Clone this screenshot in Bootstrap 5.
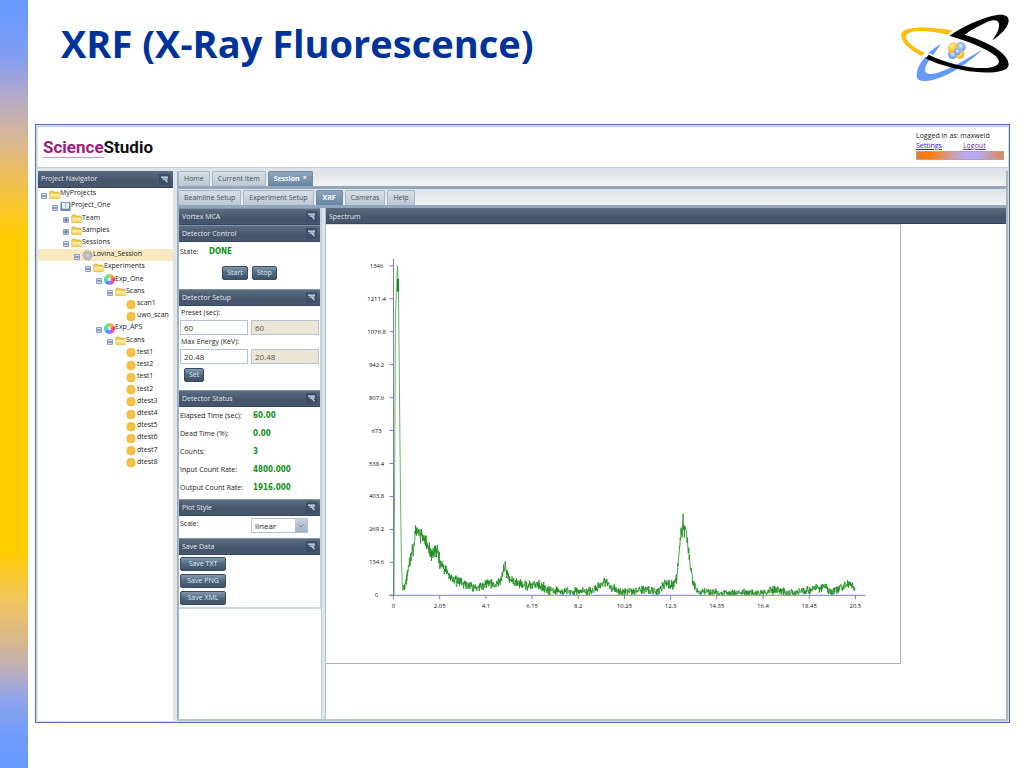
<!DOCTYPE html>
<html lang="en">
<head>
<meta charset="utf-8">
<meta name="viewport" content="width=device-width, initial-scale=1">
<title>XRF (X-Ray Fluorescence)</title>
<link href="https://cdn.jsdelivr.net/npm/bootstrap@5.3.0/dist/css/bootstrap.min.css" rel="stylesheet">
<style>
  body { font-family: "Open Sans", "Noto Sans", sans-serif; font-size: 7px; line-height: 12px; color: #222; background: #fff; }
  button, input, select { font-family: inherit; }
  .stripe { width: 28px; background: linear-gradient(#6699ff 0, #7f9df4 7%, #b0a9ce 12%, #d2b59e 17%, #eebe5a 23%, #fcc822 28%, #ffcc00 31%, #ffcc00 72%, #fcc824 74%, #f2c55c 78%, #dab888 83%, #c0b0b8 87%, #8fa3ea 91%, #6f9cfb 96%, #6699ff 100%); }
  .page-main { min-width: 0; }
  .slide-title { font-size: 38px; line-height: 48px; font-weight: 700; color: #003399; padding-left: 26px; padding-top: 19px; }
  .slide-head { height: 124px; padding-right: 14px; padding-left: 7px; }
  .orbit { width: 110px; height: 70px; margin-top: 13px; }
  .app { border: 1px solid #5867b8; margin: 0 14px 45px 7px; padding: 1px 1px 1px 2px; background: #d5dff0; min-width: 0; }
  .app-head { background: #fff; height: 41px; padding: 4px 4px 0 5px; border-top: 1px solid #b9c6de; }
  .brand { font-family: Roboto, sans-serif; font-size: 17px; line-height: 20px; font-weight: 700; color: #111; margin-top: 6px; }
  .brand span { color: #9c1b7c; border-bottom: 1px solid #d58bc4; }
  .user { width: 88px; line-height: 10px; }
  .user a { color: #2222dd; }
  .user a + a { color: #6a2a96; margin-left: 21px; }
  .user-bar { height: 9px; border: 1px solid #a9a4b4; background: linear-gradient(90deg, #f07818, #ff7d08 15%, #c8a0b0 42%, #b8a8f8 60%, #b8a8ec 72%, #e08850 100%); }
  .work { background: #dde4ec; border-top: 1px solid #c6ccd4; padding-top: 3px; }
  .navigator { width: 135px; background: #fff; }
  .bar { height: 17px; padding: 0 3px; color: #e4ebf2; background: linear-gradient(#5d6d80, #44546a 60%, #46576e); border-bottom: 1px solid #35455a; font-size: 7px; font-weight: 400; line-height: 12px; }
  .tool { width: 11px; height: 11px; padding: 0; border: 0; background: none; display: block; line-height: 0; }
  .tool svg { width: 11px; height: 11px; }
  .tree { height: 281px; display: grid; grid-auto-rows: minmax(0, 1fr); list-style: none; margin: 0; padding: 0; }
  .tree li { display: flex; align-items: center; line-height: 12px; white-space: nowrap; min-height: 0; }
  .tree .active { background: #f8e9c2; }
  .tree svg { flex: none; }
  .tree .toggle { width: 6px; height: 6px; margin: 3px 2px 0 3px; }
  .tree .leaf { margin-left: 11px; }
  .tree .glyph { width: 11px; height: 11px; }
  .tree span { padding-bottom: 2px; line-height: 10px; }
  .l1 { padding-left: 11px } .l2 { padding-left: 22px } .l3 { padding-left: 33px } .l4 { padding-left: 44px }
  .l5 { padding-left: 55px } .l6 { padding-left: 66px } .l7 { padding-left: 77px }
  .content-col { margin-left: 4px; border-left: 1px solid #9fb0c2; border-right: 2px solid #a9b7c8; border-bottom: 2px solid #b8c4d0; min-width: 0; background: #dde4ec; }
  .nav-tabs.strip { height: 18px; border-bottom: 3px solid #8fa6bb; padding-left: 0; gap: 2px; background: linear-gradient(#dfe2e6, #f3f3f3); flex-wrap: nowrap; }
  .nav-tabs.strip .nav-link { height: 15px; padding: 0 5px; line-height: 14px; border: 1px solid #a4b4c4; border-bottom: 0; border-radius: 2px 2px 0 0; color: #4a4f56; background: linear-gradient(#d9dfe5, #bcc8d4); margin: 0; white-space: nowrap; }
  .nav-tabs.strip .nav-link.active { color: #fff; font-weight: 700; background: linear-gradient(#8fa6bc, #6685a3); border-color: #6c88a4; }
  .nav-tabs.strip.second { margin-top: 1px; }
  .strip.second .nav-link.active { padding: 0 6px; }
  .close-x { line-height: 6px; margin-left: 3px; margin-top: -3px; }
  .controls { width: 144px; border-left: 1px solid #a8b4c2; border-right: 1px solid #c2ccd8; background: #fff; }
  .controls .bar { margin-bottom: 0; border-top: 1px solid #8094a8; }
  .controls .inner { border-bottom: 2px solid #ccd6e0; border-right: 1px solid #ccd6e0; }
  .panel-body { padding: 0 1px; }
  .control-body { height: 47px; }
  .control-body .state { width: 29px; }
  .setup-body { height: 84px; }
  .status-body { height: 92px; }
  .scale-body { height: 22px; padding-top: 2px; }
  .scale-body label { width: 71px; }
  .ok { color: #109018; font-family: "DejaVu Sans Condensed", "DejaVu Sans", sans-serif; font-weight: 700; font-size: 8px; }
  .btn.act { font-size: 7px; line-height: 12px; height: 14px; padding: 0 4px; color: #dfe8f0; border: 1px solid #3a4c60; border-radius: 2px; background: linear-gradient(#8298ae, #506880 50%, #3e5268); display: block; }
  .save { gap: 3px; padding: 2px 1px; }
  .save .btn.act { padding: 0 6px; min-width: 46px; }
  .pair { gap: 3px; }
  .form-control.cell { width: 68px; height: 15px; min-height: 0; font-size: 8px; line-height: 12px; padding: 0 3px; border: 1px solid #b4c3d2; border-radius: 0; color: #333; background: #fff; }
  .form-control.cell:disabled { background: #ece6d6; color: #555; }
  .form-label { margin: 0; display: block; line-height: 14px; height: 14px; padding-left: 1px; }
  .stats { display: grid; grid-template-columns: 73px 1fr; grid-auto-rows: 1fr; height: 90px; align-items: center; margin: 0; }
  .stats dt, .stats dd { font-weight: 400; margin: 0; white-space: nowrap; }
  .stats dd { font-weight: 700; }
  .scale { width: 57px; height: 15px; }
  .scale .form-select { appearance: none; font-size: 8px; line-height: 12px; padding: 0 3px; height: 15px; border: 1px solid #b4c3d2; border-radius: 0; background: #fff; color: #222; }
  .scale .arrow { position: absolute; right: 1px; top: 1px; bottom: 1px; width: 12px; background: linear-gradient(#c6d2de, #9fb2c6); pointer-events: none; }
  .plot-col { margin-left: 3px; background: #fff; border-left: 1px solid #b4c0cc; min-width: 0; }
  .plot-col .bar { height: 16px; line-height: 17px; }
  .plot { display: block; width: 575px; height: 440px; max-width: 100%; border: 1px solid #b2b2b2; border-top-color: #ddd; border-left: 0; }
  .plot text { font-size: 6px; fill: #111; text-anchor: middle; }
</style>
</head>
<body>
<svg width="0" height="0" class="position-absolute" aria-hidden="true">
  <defs>
    <linearGradient id="gold" x1="0" y1="0" x2="0" y2="1"><stop offset="0" stop-color="#fdf4b4"/><stop offset="1" stop-color="#f6d050"/></linearGradient>
    <radialGradient id="ballY" cx=".4" cy=".35"><stop offset="0" stop-color="#fff0b0"/><stop offset="1" stop-color="#f8b820"/></radialGradient>
    <radialGradient id="ballB" cx=".5" cy=".4"><stop offset="0" stop-color="#e4ecff"/><stop offset="1" stop-color="#6d98f0"/></radialGradient>
    <symbol id="minus" viewBox="0 0 6 6"><rect width="6" height="6" rx="1" fill="#8fa0c0"/><rect x="1" y="1" width="4" height="4" fill="#d4dcec"/><path d="M1 3h4" stroke="#4a5c88"/></symbol>
    <symbol id="plus" viewBox="0 0 6 6"><rect width="6" height="6" rx="1" fill="#8fa0c0"/><rect x="1" y="1" width="4" height="4" fill="#d4dcec"/><path d="M1 3h4M3 1v4" stroke="#4a5c88"/></symbol>
    <symbol id="folder" viewBox="0 0 11 11"><path d="M.8 9.500V3q0-1 1-1h2.400l1 1h4q1 0 1 1v5.500z" fill="#f0cc54" stroke="#cfa032" stroke-width=".6"/><path d="M1.300 9.600V5h9v4.600z" fill="url(#gold)"/></symbol>
    <symbol id="book" viewBox="0 0 11 11"><path d="M.5 1.800h10v8H.5z" fill="#5b82ae"/><path d="M1.500 1.300q3-.5 4 .8 1-1.300 4-.8v6.800q-3-.4-4 .8-1-1.200-4-.8z" fill="#eaf2fa" stroke="#46699a" stroke-width=".7"/><path d="M5.500 2.300v6.500" stroke="#7a98bc" stroke-width=".7"/></symbol>
    <symbol id="gear" viewBox="0 0 11 11"><circle cx="5.500" cy="5.500" r="4" fill="#bcbcbc"/><circle cx="5.500" cy="5.500" r="4.400" fill="none" stroke="#a2a2a2" stroke-width="1.400" stroke-dasharray="1.600 .9"/><circle cx="5.500" cy="5.500" r="1.200" fill="#dcd8cc"/></symbol>
    <symbol id="wheel" viewBox="0 0 11 11"><path d="M5.500 5.500V0a5.500 5.500 0 0 1 4.800 2.800z" fill="#ffa040"/><path d="M5.500 5.500 10.300 2.800a5.500 5.500 0 0 1 0 5.400z" fill="#f04868"/><path d="M5.500 5.500 10.300 8.200A5.500 5.500 0 0 1 5.500 11z" fill="#c050f0"/><path d="M5.500 5.500V11A5.500 5.500 0 0 1 .7 8.200z" fill="#5a80ff"/><path d="M5.500 5.500.7 8.200a5.500 5.500 0 0 1 0-5.400z" fill="#40d8e0"/><path d="M5.500 5.500.7 2.800A5.500 5.500 0 0 1 5.500 0z" fill="#70e060"/><circle cx="5.500" cy="5.500" r="1.700" fill="#fff" opacity=".7"/></symbol>
    <symbol id="dot" viewBox="0 0 11 11"><rect x=".8" y="1.200" width="8.400" height="8.800" rx="4" fill="#f6c040" stroke="#e6ae34" stroke-width=".5"/></symbol>
    <symbol id="pin" viewBox="0 0 11 11"><rect width="11" height="11" rx="1" fill="#3c4e66"/><path d="M2 2.500h7v1.300H2z" fill="#dbe5f0"/><path d="M3.500 4.300h5.200v1.500H7.400L9 7.800l-.9.900-3-2.900H3.500z" fill="#b4c6da"/></symbol>
  </defs>
</svg>

<div class="d-flex min-vh-100">
  <div class="stripe flex-shrink-0"></div>
  <div class="page-main d-flex flex-column flex-grow-1">
    <header class="slide-head d-flex justify-content-between">
      <h1 class="slide-title m-0">XRF (X-Ray Fluorescence)</h1>
      <svg class="orbit flex-shrink-0" viewBox="60 39 330 210" role="img" aria-label="Orbit logo">
        <path fill="#6699f8" d="M183 132C152 147 118 185 111 215C106 237 118 244 137 243C190 240 262 192 306 149C258 178 190 220 152 222C126 222 134 200 150 178Z"/>
        <path fill="#fdbd10" d="M218 92C160 80 62 75 63 106C65 130 95 155 125 168L134 159C100 141 78 125 78 110C80 88 140 88 203 104Z"/>
        <path fill="#fff" d="M132 167L150 160L178 178L168 192Z"/>
        <path fill="#050505" d="M208 107C250 80 310 50 352 45C374 42 387 48 386 64C384 84 358 108 337 121C349 102 358 90 357 73C356 60 342 57 320 67C298 77 272 90 254 104C330 128 386 160 386 194C385 222 305 221 250 211C205 202 160 188 137 175L146 164C200 190 270 207 320 204C363 201 366 182 340 163C308 140 258 122 208 107Z"/>
        <circle cx="242" cy="141" r="15" fill="url(#ballB)"/><circle cx="218" cy="163" r="14" fill="url(#ballB)"/>
        <circle cx="240" cy="163" r="13" fill="url(#ballY)"/><circle cx="219" cy="143" r="16" fill="url(#ballY)"/>
        <circle cx="232" cy="155" r="10" fill="url(#ballB)"/>
      </svg>
    </header>

    <main class="app flex-grow-1 d-flex flex-column">
      <div class="app-head d-flex justify-content-between">
        <div class="brand"><span>Science</span>Studio</div>
        <div class="user">
          <div>Logged in as: maxweld</div>
          <div><a href="#">Settings</a><a href="#">Logout</a></div>
          <div class="user-bar"></div>
        </div>
      </div>

      <div class="work d-flex flex-grow-1">
        <aside class="navigator flex-shrink-0">
          <h2 class="bar d-flex align-items-center justify-content-between m-0">Project Navigator
            <button class="tool" aria-label="Collapse"><svg><use href="#pin"/></svg></button></h2>
          <ul class="tree" id="tree"></ul>
        </aside>

        <section class="content-col flex-grow-1 d-flex flex-column">
          <nav class="nav nav-tabs strip" aria-label="Main">
            <button class="nav-link">Home</button>
            <button class="nav-link">Current Item</button>
            <button class="nav-link active d-flex align-items-center">Session <span class="close-x">×</span></button>
          </nav>
          <nav class="nav nav-tabs strip second" aria-label="Session">
            <button class="nav-link">Beamline Setup</button>
            <button class="nav-link">Experiment Setup</button>
            <button class="nav-link active">XRF</button>
            <button class="nav-link">Cameras</button>
            <button class="nav-link">Help</button>
          </nav>

          <div class="d-flex flex-grow-1">
            <div class="controls flex-shrink-0">
              <div class="inner">
                <h2 class="bar d-flex align-items-center justify-content-between">Vortex MCA <button class="tool" aria-label="Collapse"><svg><use href="#pin"/></svg></button></h2>
                <h3 class="bar d-flex align-items-center justify-content-between">Detector Control <button class="tool" aria-label="Collapse"><svg><use href="#pin"/></svg></button></h3>
                <div class="panel-body control-body">
                  <div class="d-flex pt-1 mb-2"><span class="state">State:</span><span class="ok">DONE</span></div>
                  <div class="d-flex justify-content-center gap-1"><button class="btn act">Start</button><button class="btn act">Stop</button></div>
                </div>
                <h3 class="bar d-flex align-items-center justify-content-between">Detector Setup <button class="tool" aria-label="Collapse"><svg><use href="#pin"/></svg></button></h3>
                <div class="panel-body setup-body">
                  <label class="form-label" for="preset">Preset (sec):</label>
                  <div class="d-flex pair"><input class="form-control cell" id="preset" value="60"><input class="form-control cell" value="60" disabled aria-label="Current preset"></div>
                  <label class="form-label" for="energy">Max Energy (KeV):</label>
                  <div class="d-flex pair"><input class="form-control cell" id="energy" value="20.48"><input class="form-control cell" value="20.48" disabled aria-label="Current max energy"></div>
                  <button class="btn act ms-1 mt-1">Set</button>
                </div>
                <h3 class="bar d-flex align-items-center justify-content-between">Detector Status <button class="tool" aria-label="Collapse"><svg><use href="#pin"/></svg></button></h3>
                <div class="panel-body status-body">
                  <dl class="stats">
                    <dt>Elapsed Time (sec):</dt><dd class="ok">60.00</dd>
                    <dt>Dead Time (%):</dt><dd class="ok">0.00</dd>
                    <dt>Counts:</dt><dd class="ok">3</dd>
                    <dt>Input Count Rate:</dt><dd class="ok">4800.000</dd>
                    <dt>Output Count Rate:</dt><dd class="ok">1916.000</dd>
                  </dl>
                </div>
                <h3 class="bar d-flex align-items-center justify-content-between">Plot Style <button class="tool" aria-label="Collapse"><svg><use href="#pin"/></svg></button></h3>
                <div class="panel-body scale-body d-flex">
                  <label for="scale">Scale:</label>
                  <div class="scale position-relative">
                    <select class="form-select" id="scale"><option>linear</option><option>log</option></select>
                    <svg class="arrow" viewBox="0 0 12 13" width="12" height="13"><path d="M3.500 5.500 6 8l2.500-2.500" fill="none" stroke="#6d8298"/></svg>
                  </div>
                </div>
                <h3 class="bar d-flex align-items-center justify-content-between">Save Data <button class="tool" aria-label="Collapse"><svg><use href="#pin"/></svg></button></h3>
                <div class="save d-flex flex-column align-items-start">
                  <button class="btn act">Save TXT</button><button class="btn act">Save PNG</button><button class="btn act">Save XML</button>
                </div>
              </div>
            </div>
            <div class="plot-col flex-grow-1">
              <h2 class="bar m-0">Spectrum</h2>
              <svg class="plot" id="plot" viewBox="0 0 575 440" role="img" aria-label="Spectrum"></svg>
            </div>
          </div>
        </section>
      </div>
    </main>
  </div>
</div>

<script src="https://cdn.jsdelivr.net/npm/bootstrap@5.3.0/dist/js/bootstrap.bundle.min.js"></script>
<script>
  // Project tree: [level, icon, label, toggle]
  const nodes = [
    [0, 'folder', 'MyProjects', 'minus'], [1, 'book', 'Project_One', 'minus'], [2, 'folder', 'Team', 'plus'],
    [2, 'folder', 'Samples', 'plus'], [2, 'folder', 'Sessions', 'minus'], [3, 'gear', 'Lovina_Session', 'minus'],
    [4, 'folder', 'Experiments', 'minus'], [5, 'wheel', 'Exp_One', 'minus'], [6, 'folder', 'Scans', 'minus'],
    [7, 'dot', 'scan1'], [7, 'dot', 'uwo_scan'], [5, 'wheel', 'Exp_APS', 'minus'], [6, 'folder', 'Scans', 'minus'],
    ...['test1', 'test2', 'test1', 'test2', 'dtest3', 'dtest4', 'dtest5', 'dtest6', 'dtest7', 'dtest8'].map(t => [7, 'dot', t])
  ];
  document.getElementById('tree').innerHTML = nodes.map(([l, icon, text, toggle]) =>
    `<li class="l${l}${text === 'Lovina_Session' ? ' active' : ''}">` +
    (toggle ? `<svg class="toggle"><use href="#${toggle}"/></svg>` : '') +
    `<svg class="glyph${toggle ? '' : ' leaf'}"><use href="#${icon}"/></svg><span>${text}</span></li>`).join('');

  // Spectrum: axes, ticks and the counted signal
  const X0 = 67, Y0 = 372;
  let out = '';
  for (let i = 0; i <= 10; i++) {
    const x = X0 + i * 46.4, y = Y0 - i * 33.1;
    out += `<path d="M${x} ${Y0}v4M${X0} ${y}h-4" stroke="#7a7ad0"/>`;
    out += `<text x="${x}" y="${Y0 + 13}">${+(i * 2.05).toFixed(2)}</text>`;
    out += `<text x="50" y="${y + 2}">${+(i * 134.6).toFixed(1)}</text>`;
  }
  out += `<path d="M${X0} ${Y0 + 4}V34M${X0 - 4} ${Y0}H541" stroke="#7a7ad0" fill="none"/>`;
  const shape = [[76,9],[78,8],[82,26],[86,43],[89,62],[94,63],[99,55],[105,40],[110,46],[114,34],[120,24],[124,18],[134,13],[146,8],[156,9],
    [163,13],[169,9],[174,15],[179,29],[184,16],[192,12],[202,8],[210,13],[216,9],[224,5],[244,4],[264,4],[274,8],[280,15],[286,8],
    [294,4],[310,4],[320,6],[332,3],[340,12],[348,11],[352,18],[355,58],[358,71],[362,58],[365,30],[369,9],[372,4],[394,3],[434,2],[454,6],
    [462,2],[474,3],[488,7],[499,8],[509,4],[519,9],[525,12],[531,6]];
  let seed = 11, d = '';
  const rnd = () => (seed = (seed * 16807) % 2147483647) / 2147483647;
  for (let x = 76; x < 531; x += 0.3) {
    const k = shape.findIndex(p => p[0] > x), a = shape[k - 1], b = shape[k];
    const h = a[1] + (b[1] - a[1]) * (x - a[0]) / (b[0] - a[0]);
    const v = h + (rnd() + rnd() - 1) * (3 + Math.sqrt(h));
    d += `${d ? 'L' : 'M'}${x.toFixed(1)} ${(Y0 - Math.max(0.5, v)).toFixed(1)}`;
  }
  out += `<path d="M67.500 372L69 90L71 41L72 66L74 270L75 340L76 363" fill="none" stroke="#3da03d" stroke-width=".8"/>`;
  out += `<path d="${d}" fill="none" stroke="#1a8a1a" stroke-width=".8"/><path d="M71.500 54v13" stroke="#1a8c1a" stroke-width="2"/>`;
  document.getElementById('plot').innerHTML = out;
</script>
</body>
</html>
